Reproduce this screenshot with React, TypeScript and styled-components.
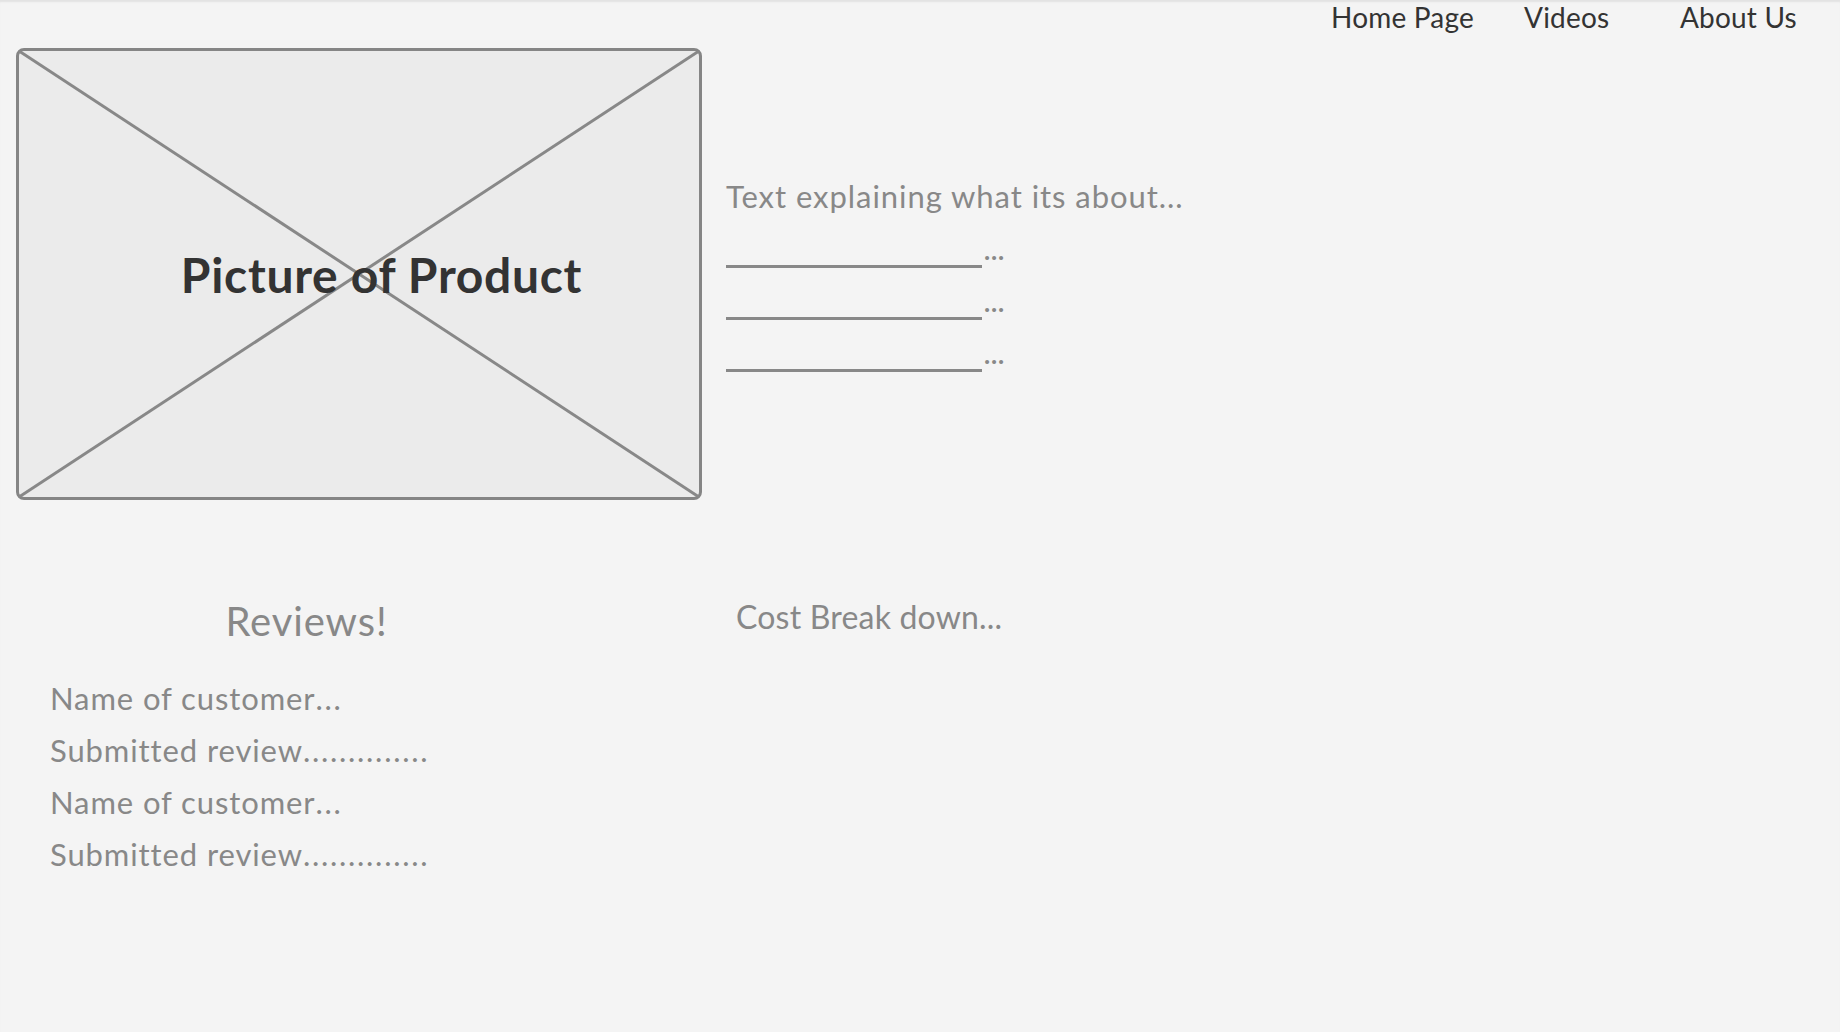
import React from "react";
import styled, { createGlobalStyle } from "styled-components";

const GlobalStyle = createGlobalStyle`
  html, body {
    margin: 0;
    padding: 0;
    background: #f4f4f4;
  }
  body {
    font-family: Lato, "Open Sans", "Liberation Sans", sans-serif;
  }
  * { box-sizing: border-box; }
`;

const Page = styled.div`
  width: 1840px;
  height: 1032px;
  background: #f4f4f4;
  box-shadow: inset 0 3px 2px -1px #e2e2e2;
  overflow: hidden;
`;

const Nav = styled.nav`
  display: grid;
  grid-template-columns: 193px 156px 160px;
  justify-content: end;
  align-items: start;
  height: 34px;
`;

const NavLink = styled.a`
  font-size: 28px;
  line-height: 34px;
  color: #333333;
  text-decoration: none;
  white-space: nowrap;
  letter-spacing: 0.2px;
`;

const TopRow = styled.section`
  display: flex;
  align-items: flex-start;
  gap: 24px;
  margin-top: 14px;
  padding-left: 16px;
`;

const ImageBox = styled.div`
  position: relative;
  width: 686px;
  height: 452px;
  border: 3px solid #858585;
  border-radius: 8px;
  background: #ebebeb;
  display: flex;
  align-items: center;
  justify-content: center;
  padding-left: 45px;
`;

const Cross = styled.svg`
  position: absolute;
  inset: 0;
  width: 100%;
  height: 100%;
`;

const ImageLabel = styled.span`
  position: relative;
  font-size: 48px;
  font-weight: 700;
  color: #333333;
  white-space: nowrap;
  letter-spacing: 0.7px;
`;

const Summary = styled.div`
  display: flex;
  flex-direction: column;
  padding-top: 128px;
`;

const SummaryText = styled.p`
  margin: 0;
  font-size: 31px;
  line-height: 40px;
  color: #888888;
  white-space: nowrap;
  letter-spacing: 0.95px;
`;

const BlankRow = styled.div`
  display: flex;
  align-items: flex-end;
  height: 52px;
`;

const BlankLine = styled.span`
  display: block;
  width: 256px;
  height: 3px;
  background: #888888;
`;

const Dots = styled.span`
  font-size: 26px;
  font-weight: 700;
  line-height: 1;
  color: #888888;
  margin-left: 2px;
  margin-bottom: 5px;
  letter-spacing: 0.8px;
`;

const BottomRow = styled.section`
  display: grid;
  grid-template-columns: 613px 1fr;
  column-gap: 123px;
  margin-top: 95px;
`;

const Reviews = styled.div`
  display: flex;
  flex-direction: column;
`;

const ReviewsTitle = styled.h2`
  margin: 2px 0 0;
  font-size: 40px;
  line-height: 48px;
  font-weight: 400;
  color: #888888;
  text-align: center;
  letter-spacing: 0.9px;
`;

const ReviewList = styled.div`
  display: flex;
  flex-direction: column;
  margin-top: 27px;
  padding-left: 50px;
`;

const ReviewLine = styled.p`
  margin: 0;
  font-size: 31px;
  line-height: 52px;
  color: #888888;
  white-space: nowrap;
  letter-spacing: 0.9px;
`;

const Trail = styled.span`
  letter-spacing: 1.7px;
`;

const CostTitle = styled.h3`
  margin: 2px 0 0;
  font-size: 32px;
  line-height: 40px;
  font-weight: 400;
  color: #888888;
  letter-spacing: 0.2px;
`;

const reviews = [
  { text: "Name of customer", trail: "..." },
  { text: "Submitted review", trail: ".............." },
  { text: "Name of customer", trail: "..." },
  { text: "Submitted review", trail: ".............." },
];

export default function App() {
  return (
    <>
      <GlobalStyle />
      <Page>
        <Nav>
          <NavLink href="#">Home Page</NavLink>
          <NavLink href="#">Videos</NavLink>
          <NavLink href="#">About Us</NavLink>
        </Nav>
        <TopRow>
          <ImageBox>
            <Cross viewBox="0 0 680 446" preserveAspectRatio="none">
              <line x1="0" y1="0" x2="680" y2="446" stroke="#888888" strokeWidth="3" />
              <line x1="680" y1="0" x2="0" y2="446" stroke="#888888" strokeWidth="3" />
            </Cross>
            <ImageLabel>Picture of Product</ImageLabel>
          </ImageBox>
          <Summary>
            <SummaryText>Text explaining what its about...</SummaryText>
            {[0, 1, 2].map((i) => (
              <BlankRow key={i}>
                <BlankLine />
                <Dots>...</Dots>
              </BlankRow>
            ))}
          </Summary>
        </TopRow>
        <BottomRow>
          <Reviews>
            <ReviewsTitle>Reviews!</ReviewsTitle>
            <ReviewList>
              {reviews.map((r, i) => (
                <ReviewLine key={i}>
                  {r.text}
                  <Trail>{r.trail}</Trail>
                </ReviewLine>
              ))}
            </ReviewList>
          </Reviews>
          <CostTitle>Cost Break down...</CostTitle>
        </BottomRow>
      </Page>
    </>
  );
}
